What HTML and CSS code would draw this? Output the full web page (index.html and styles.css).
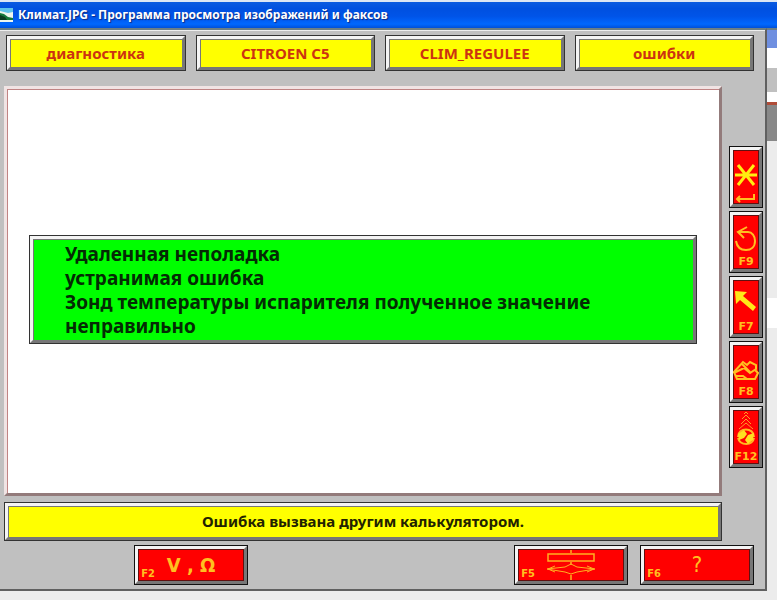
FILE: index.html
```html
<!DOCTYPE html>
<html lang="ru">
<head>
  <meta charset="UTF-8" />
  <meta name="viewport" content="width=device-width, initial-scale=1.0"/>
  <title>Климат.JPG - Программа просмотра изображений и факсов</title>
  <link rel="stylesheet" href="styles.css">
</head>
<body>
  <header class="titlebar">
    <svg class="app-icon" width="13" height="14" viewBox="0 0 13 14">
      <rect width="13" height="14" fill="#eef6ee"/>
      <path d="M0 0h13v4L8 5 0 3z" fill="#5fc3ea"/>
      <path d="M0 5l4 1 4 3 5 1v2H0z" fill="#157a3c"/>
      <path d="M0 7l5 2 2 3H0z" fill="#0b3d22"/>
    </svg>
    <h1>Климат.JPG - Программа просмотра изображений и факсов</h1>
  </header>

  <div class="desktop">
    <div class="app">
      <nav class="tabs">
        <button class="tab">диагностика</button>
        <button class="tab">CITROEN C5</button>
        <button class="tab">CLIM_REGULEE</button>
        <button class="tab">ошибки</button>
      </nav>

      <div class="work">
        <main class="screen">
          <div class="fault">
            <p>Удаленная неполадка</p>
            <p>устранимая ошибка</p>
            <p>Зонд температуры испарителя полученное значение неправильно</p>
          </div>
        </main>

        <aside class="side">
          <button class="key" aria-label="Enter">
            <svg width="26" height="54" viewBox="0 0 26 54">
              <path d="M2 25h22M5 15l16 20M21 15L5 35" fill="none" stroke="#ffee10" stroke-width="3"/>
              <path d="M4 49h17v-5M7 46l-3 3 3 3" fill="none" stroke="#ffc020" stroke-width="2"/>
            </svg>
          </button>
          <button class="key">
            <svg width="26" height="40" viewBox="0 0 26 40">
              <path d="M6 17h9c4 0 7 4 7 9 0 6-4 9-9 9-5 0-9-3-10-9" fill="none" stroke="#ffc020" stroke-width="2"/>
              <path d="M14 12l-9 5 6 6" fill="none" stroke="#ffc020" stroke-width="2"/>
            </svg>
            <span>F9</span>
          </button>
          <button class="key">
            <svg width="26" height="40" viewBox="0 0 26 40">
              <path d="M2 11l12 1-4 4 13 11-3 4-13-11-4 4z" fill="#ffe818"/>
            </svg>
            <span>F7</span>
          </button>
          <button class="key">
            <svg width="26" height="40" viewBox="0 0 26 40">
              <path d="M1 27l9-10 4 3 3-3 6 3v4l-6 4-6-5-8 4zM1 27l3 7h18l3-6-3-3M9 19l8 8M2 31h8l4 3" fill="none" stroke="#ffc020" stroke-width="2"/>
            </svg>
            <span>F8</span>
          </button>
          <button class="key">
            <svg width="26" height="40" viewBox="0 0 26 40">
              <path d="M11 4l2-2 2 2M9 9l4-4 4 4M8 14l5-5 5 5M6 19l7-6 7 6" fill="none" stroke="#ff9a28"/>
              <path d="M5 27c0-10 16-10 16 0M21 28c-1 8-14 8-16 0" fill="none" stroke="#ffb820" stroke-width="2"/>
              <path d="M5 24l6-4 3 4-3 4-5 2zM15 25l6-2-1 7-5 4-3-4z" fill="#ffe020"/>
            </svg>
            <span>F12</span>
          </button>
        </aside>
      </div>

      <div class="status" role="status">Ошибка вызвана другим калькулятором.</div>

      <footer class="actions">
        <button class="action">
          <span class="hotkey">F2</span>
          <span class="symbol">V , Ω</span>
        </button>
        <button class="action push">
          <span class="hotkey">F5</span>
          <svg width="50" height="30" viewBox="0 0 50 30">
            <path d="M25 0v3M2 4h46v7H2zM25 12v3M25 25v5" fill="none" stroke="#ffb020" stroke-width="1.5"/>
            <path d="M1 19l18-2 6-3 6 3 18 2-18 3-6 2-6-2zM9 16l-7 3 7 3M41 16l7 3-7 3" fill="none" stroke="#ffb020"/>
          </svg>
        </button>
        <button class="action">
          <span class="hotkey">F6</span>
          <span class="symbol question">?</span>
        </button>
      </footer>
    </div>

    <div class="behind">
      <div class="strip blue"></div>
      <div class="strip white"></div>
      <div class="strip silver"></div>
      <div class="strip white short"></div>
      <div class="strip gray"></div>
      <div class="strip light"></div>
      <div class="strip white tall"></div>
    </div>
  </div>
</body>
</html>
```

FILE: styles.css
```css
* {
  box-sizing: border-box;
}
body {
  margin: 0;
  min-height: 100vh;
  background: #ececec;
  font-family: "Noto Sans", sans-serif;
  overflow-x: hidden;
}
h1, p {
  margin: 0;
}
button {
  font-family: inherit;
  cursor: pointer;
}

/* window caption */
.titlebar {
  display: flex;
  align-items: center;
  gap: 5px;
  height: 28px;
  border-top: 2px solid #dce6f4;
  background: linear-gradient(#0a5be0, #0050e0 25%, #0054e8 55%, #0068ff 85%, #0050d8);
}
.titlebar h1 {
  color: white;
  font-size: 12px;
  line-height: 16px;
  text-shadow: 1px 1px 1px #102a80;
  white-space: nowrap;
}

.desktop {
  display: flex;
}
.app {
  flex: 1;
  min-width: 0;
  padding-top: 3px;
  background: #c0c0c0;
  border-top: 2px solid #6b7f86;
  border-right: 2px solid #606060;
  border-bottom: 2px solid #606060;
  box-shadow: inset 0 1px #eeeeee;
}

/* shared bevel */
.tab, .status, .fault, .action, .key {
  border: 3px solid;
  border-color: #f4f4f4 #777777 #777777 #f4f4f4;
  outline: 1px solid #333333;
  outline-offset: -1px;
  box-shadow: inset 1px 1px #777777;
}

.tabs {
  display: grid;
  grid-template-columns: repeat(4, 1fr);
  gap: 10px;
  padding: 2px 11px 0 6px;
}
.tab {
  height: 36px;
  border-width: 4px;
  padding: 0;
  background: #ffff00;
  color: #cc3311;
  font-size: 15px;
  font-weight: bold;
}

.work {
  display: flex;
  gap: 7px;
  padding: 15px 2px 0 4px;
}
.screen {
  flex: 1;
  min-width: 0;
  height: 410px;
  padding: 146px 22px 0;
  background: white;
  border: 3px solid;
  border-color: #f0e4e4 #937b7b #937b7b #f0e4e4;
  box-shadow: inset 1px 1px #c08484;
}
.fault {
  min-height: 109px;
  border-width: 4px;
  padding: 3px 32px 0;
  background: #00ff00;
  color: #042b04;
  font-size: 19px;
  font-weight: bold;
  line-height: 24px;
}

.side {
  display: flex;
  flex-direction: column;
  gap: 3px;
  padding-top: 60px;
}
.key, .action {
  outline-color: #111111;
  background: #ff0000;
  color: #ffc020;
  box-shadow: inset 0 0 0 1px #601010;
}
.key {
  display: flex;
  flex-direction: column;
  align-items: center;
  width: 34px;
  height: 62px;
  border-width: 4px;
  padding: 0;
}
.key svg {
  display: block;
  flex: none;
}
.key span {
  font-family: "DejaVu Sans", sans-serif;
  font-size: 11px;
  font-weight: bold;
  line-height: 14px;
}

.status {
  height: 39px;
  margin: 6px 43px 0 4px;
  border-width: 4px;
  background: #ffff00;
  color: #222200;
  font-size: 15px;
  font-weight: bold;
  line-height: 31px;
  text-align: center;
}

.actions {
  display: flex;
  gap: 12px;
  padding: 4px 11px 4px 134px;
}
.action {
  display: grid;
  grid-template-columns: 18px 1fr 18px;
  align-items: center;
  justify-items: center;
  width: 114px;
  height: 40px;
  border-width: 4px;
  padding: 0 1px;
}
.push {
  margin-left: auto;
}
.hotkey {
  align-self: end;
  font-family: "DejaVu Sans Condensed", sans-serif;
  font-size: 11px;
  font-weight: bold;
  line-height: 14px;
}
.symbol {
  font-family: "DejaVu Sans Condensed", sans-serif;
  font-size: 20px;
  font-weight: bold;
  line-height: 30px;
  white-space: nowrap;
}
.question {
  font-size: 22px;
  font-weight: normal;
}

/* edge of the window underneath */
.behind {
  width: 10px;
}
.strip {
  height: 20px;
}
.blue {
  background: #6f8fe0;
  border-top: 2px solid #6b7f86;
}
.white {
  background: white;
}
.silver {
  height: 24px;
  background: #c0c0c0;
}
.short {
  height: 10px;
}
.gray {
  height: 39px;
  background: #888888;
  border-top: 3px solid #b04c38;
}
.light {
  height: 157px;
}
.tall {
  height: 30px;
}
```
